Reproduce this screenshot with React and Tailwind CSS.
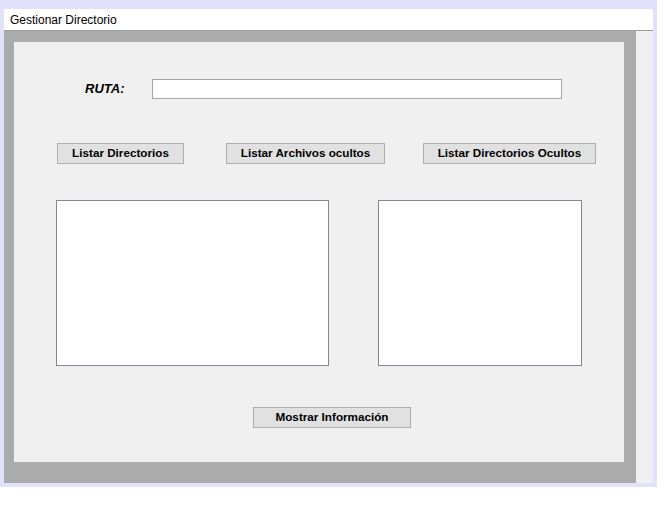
export default function App() {
  const btn =
    "h-[21px] pb-px bg-[#e1e1e1] border border-[#adadad] text-[11.7px] font-bold text-black flex items-center justify-center leading-none";
  return (
    <div className="w-[665px] h-[506px] bg-white" style={{ fontFamily: "'Liberation Sans', Arial, sans-serif" }}>
      <div className="w-[657px] h-[487px] bg-[#e1e1fb] pt-[9px] px-[4px] pb-[4px] flex flex-col">
        <div className="h-[22px] bg-white border-b border-[#9c9c9c] flex items-center pl-[6px] text-[12px] text-black leading-none">
          Gestionar Directorio
        </div>
        <div className="flex-1 bg-[#f0f0f0] flex">
          <div className="w-[632px] h-full bg-[#ababab] pt-[11px] pl-[10px]">
            <div className="w-[610px] h-[420px] bg-[#f0f0f0] flex flex-col">
              <div className="mt-[37px] flex items-center h-[20px]">
                <div className="w-[138px] pl-[71px] text-[13px] font-bold italic text-black">RUTA:</div>
                <div className="w-[410px] h-[20px] bg-white border border-[#a5a5a5]"></div>
              </div>
              <div className="mt-[44px] flex pl-[43px]">
                <div className={btn + " w-[127px]"}>Listar Directorios</div>
                <div className={btn + " w-[159px] ml-[42px]"}>Listar Archivos ocultos</div>
                <div className={btn + " w-[173px] ml-[38px]"}>Listar Directorios Ocultos</div>
              </div>
              <div className="mt-[36px] flex pl-[42px]">
                <div className="w-[273px] h-[166px] bg-white border border-[#838793]"></div>
                <div className="w-[204px] h-[166px] bg-white border border-[#838793] ml-[49px]"></div>
              </div>
              <div className="mt-[41px] flex pl-[239px]">
                <div className={btn + " w-[158px]"}>Mostrar Información</div>
              </div>
            </div>
          </div>
        </div>
      </div>
    </div>
  );
}
